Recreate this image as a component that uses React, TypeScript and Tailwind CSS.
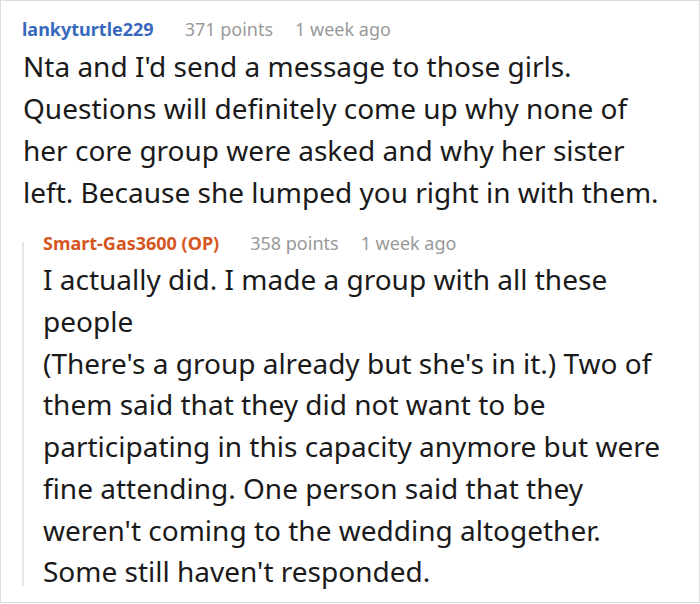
import React from 'react';

const parentLines = [
  "Nta and I'd send a message to those girls.",
  'Questions will definitely come up why none of',
  'her core group were asked and why her sister',
  'left. Because she lumped you right in with them.',
];

const replyLines = [
  'I actually did. I made a group with all these',
  'people',
  "(There's a group already but she's in it.) Two of",
  'them said that they did not want to be',
  'participating in this capacity anymore but were',
  'fine attending. One person said that they',
  "weren't coming to the wedding altogether.",
  "Some still haven't responded.",
];

const Meta: React.FC<{ name: string; color: string; points: number }> = ({ name, color, points }) => (
  <div className="flex items-center h-[24px] text-[18px] leading-[24px] whitespace-nowrap">
    <span className={`font-bold ${color}`}>{name}</span>
    <span className="ml-[31px] text-[#999999]">{points} points</span>
    <span className="ml-[22px] text-[#999999]">1 week ago</span>
  </div>
);

const App: React.FC = () => {
  return (
    <div
      className="w-[700px] h-[604px] bg-white overflow-hidden"
      style={{ fontFamily: '"Noto Sans", "Open Sans", sans-serif' }}
    >
      <div className="h-[603px] border border-[#dddddd] pl-[21px] pr-[14px] pt-[16px]">
        <Meta name="lankyturtle229" color="text-[#3869bd]" points={371} />
        <div className="mt-[4px] pl-px text-[28px] leading-[42px] text-[#1a1a1a]">
          {parentLines.map((l) => (
            <div key={l} className="whitespace-nowrap">{l}</div>
          ))}
        </div>

        <div className="mt-[18px] flex">
          <div className="w-[2px] h-[344px] mt-[11px] bg-[#e6e6e6] shrink-0" />
          <div className="pl-[19px]">
            <Meta name="Smart-Gas3600 (OP)" color="text-[#d6561f]" points={358} />
            <div className="mt-[4px] text-[28px] leading-[41.75px] text-[#1a1a1a]">
              {replyLines.map((l) => (
                <div key={l} className="whitespace-nowrap">{l}</div>
              ))}
            </div>
          </div>
        </div>
      </div>
    </div>
  );
};

export default App;
